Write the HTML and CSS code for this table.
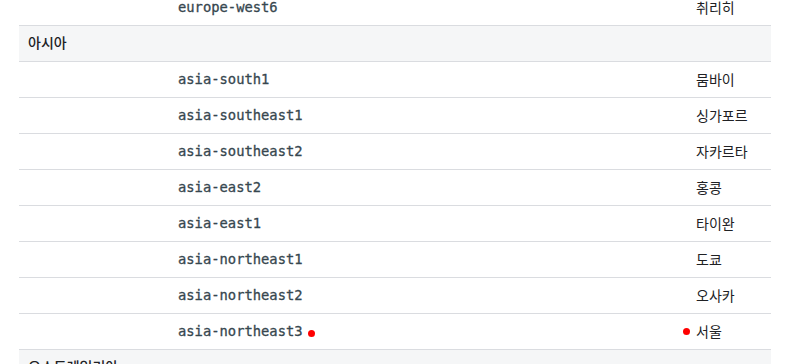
FILE: index.html
```html
<!DOCTYPE html>
<html lang="ko">
<head>
<meta charset="utf-8">
<link rel="stylesheet" href="styles.css">
</head>
<body>
<div class="page">
<table class="regions">
<colgroup><col class="c1"><col class="c2"><col class="c3"></colgroup>
<tbody>
<tr><td></td><td class="code">europe-west6</td><td class="city">취리히</td></tr>
<tr class="group"><td colspan="3">아시아</td></tr>
<tr><td></td><td class="code">asia-south1</td><td class="city">뭄바이</td></tr>
<tr><td></td><td class="code">asia-southeast1</td><td class="city">싱가포르</td></tr>
<tr><td></td><td class="code">asia-southeast2</td><td class="city">자카르타</td></tr>
<tr><td></td><td class="code">asia-east2</td><td class="city">홍콩</td></tr>
<tr><td></td><td class="code">asia-east1</td><td class="city">타이완</td></tr>
<tr><td></td><td class="code">asia-northeast1</td><td class="city">도쿄</td></tr>
<tr><td></td><td class="code">asia-northeast2</td><td class="city">오사카</td></tr>
<tr><td></td><td class="code">asia-northeast3<span class="dot-after"></span></td><td class="city"><span class="marked">서울</span></td></tr>
<tr class="group"><td colspan="3">오스트레일리아</td></tr>
</tbody>
</table>
</div>
</body>
</html>
```
FILE: styles.css
```css
html, body {
  margin: 0;
  padding: 0;
  background: #ffffff;
}
body {
  font-family: "Noto Sans CJK KR", "Noto Sans", sans-serif;
  font-size: 14px;
  color: #202124;
  overflow: hidden;
}
.page {
  padding: 0 23px 0 19px;
  margin-top: -11px;
}
.regions {
  width: 752px;
  border-collapse: collapse;
  table-layout: fixed;
}
.c1 { width: 151px; }
.c2 { width: 518px; }
.c3 { width: 83px; }
.regions td {
  height: 36px;
  padding: 0 8px;
  border-bottom: 1px solid #dadce0;
  vertical-align: middle;
  line-height: 20px;
  box-sizing: border-box;
}
.group td {
  background: #f5f6f7;
  font-weight: 500;
  padding-left: 9px;
  padding-bottom: 2px;
  border-top: 1px solid #dadce0;
}
.code {
  font-family: "DejaVu Sans Mono", "Liberation Mono", monospace;
  font-size: 13.8px;
  color: #37474f;
  -webkit-text-stroke: 0.3px #37474f;
}
.city {
  white-space: nowrap;
  padding-bottom: 2px;
}
.dot-after {
  display: inline-block;
  width: 7px;
  height: 7px;
  border-radius: 50%;
  background: #ff0000;
  margin-left: 5px;
  vertical-align: -1px;
}
.marked {
  position: relative;
}
.marked::before {
  content: "";
  position: absolute;
  left: -13px;
  top: 50%;
  width: 7px;
  height: 7px;
  margin-top: -3px;
  border-radius: 50%;
  background: #ff0000;
}
```
